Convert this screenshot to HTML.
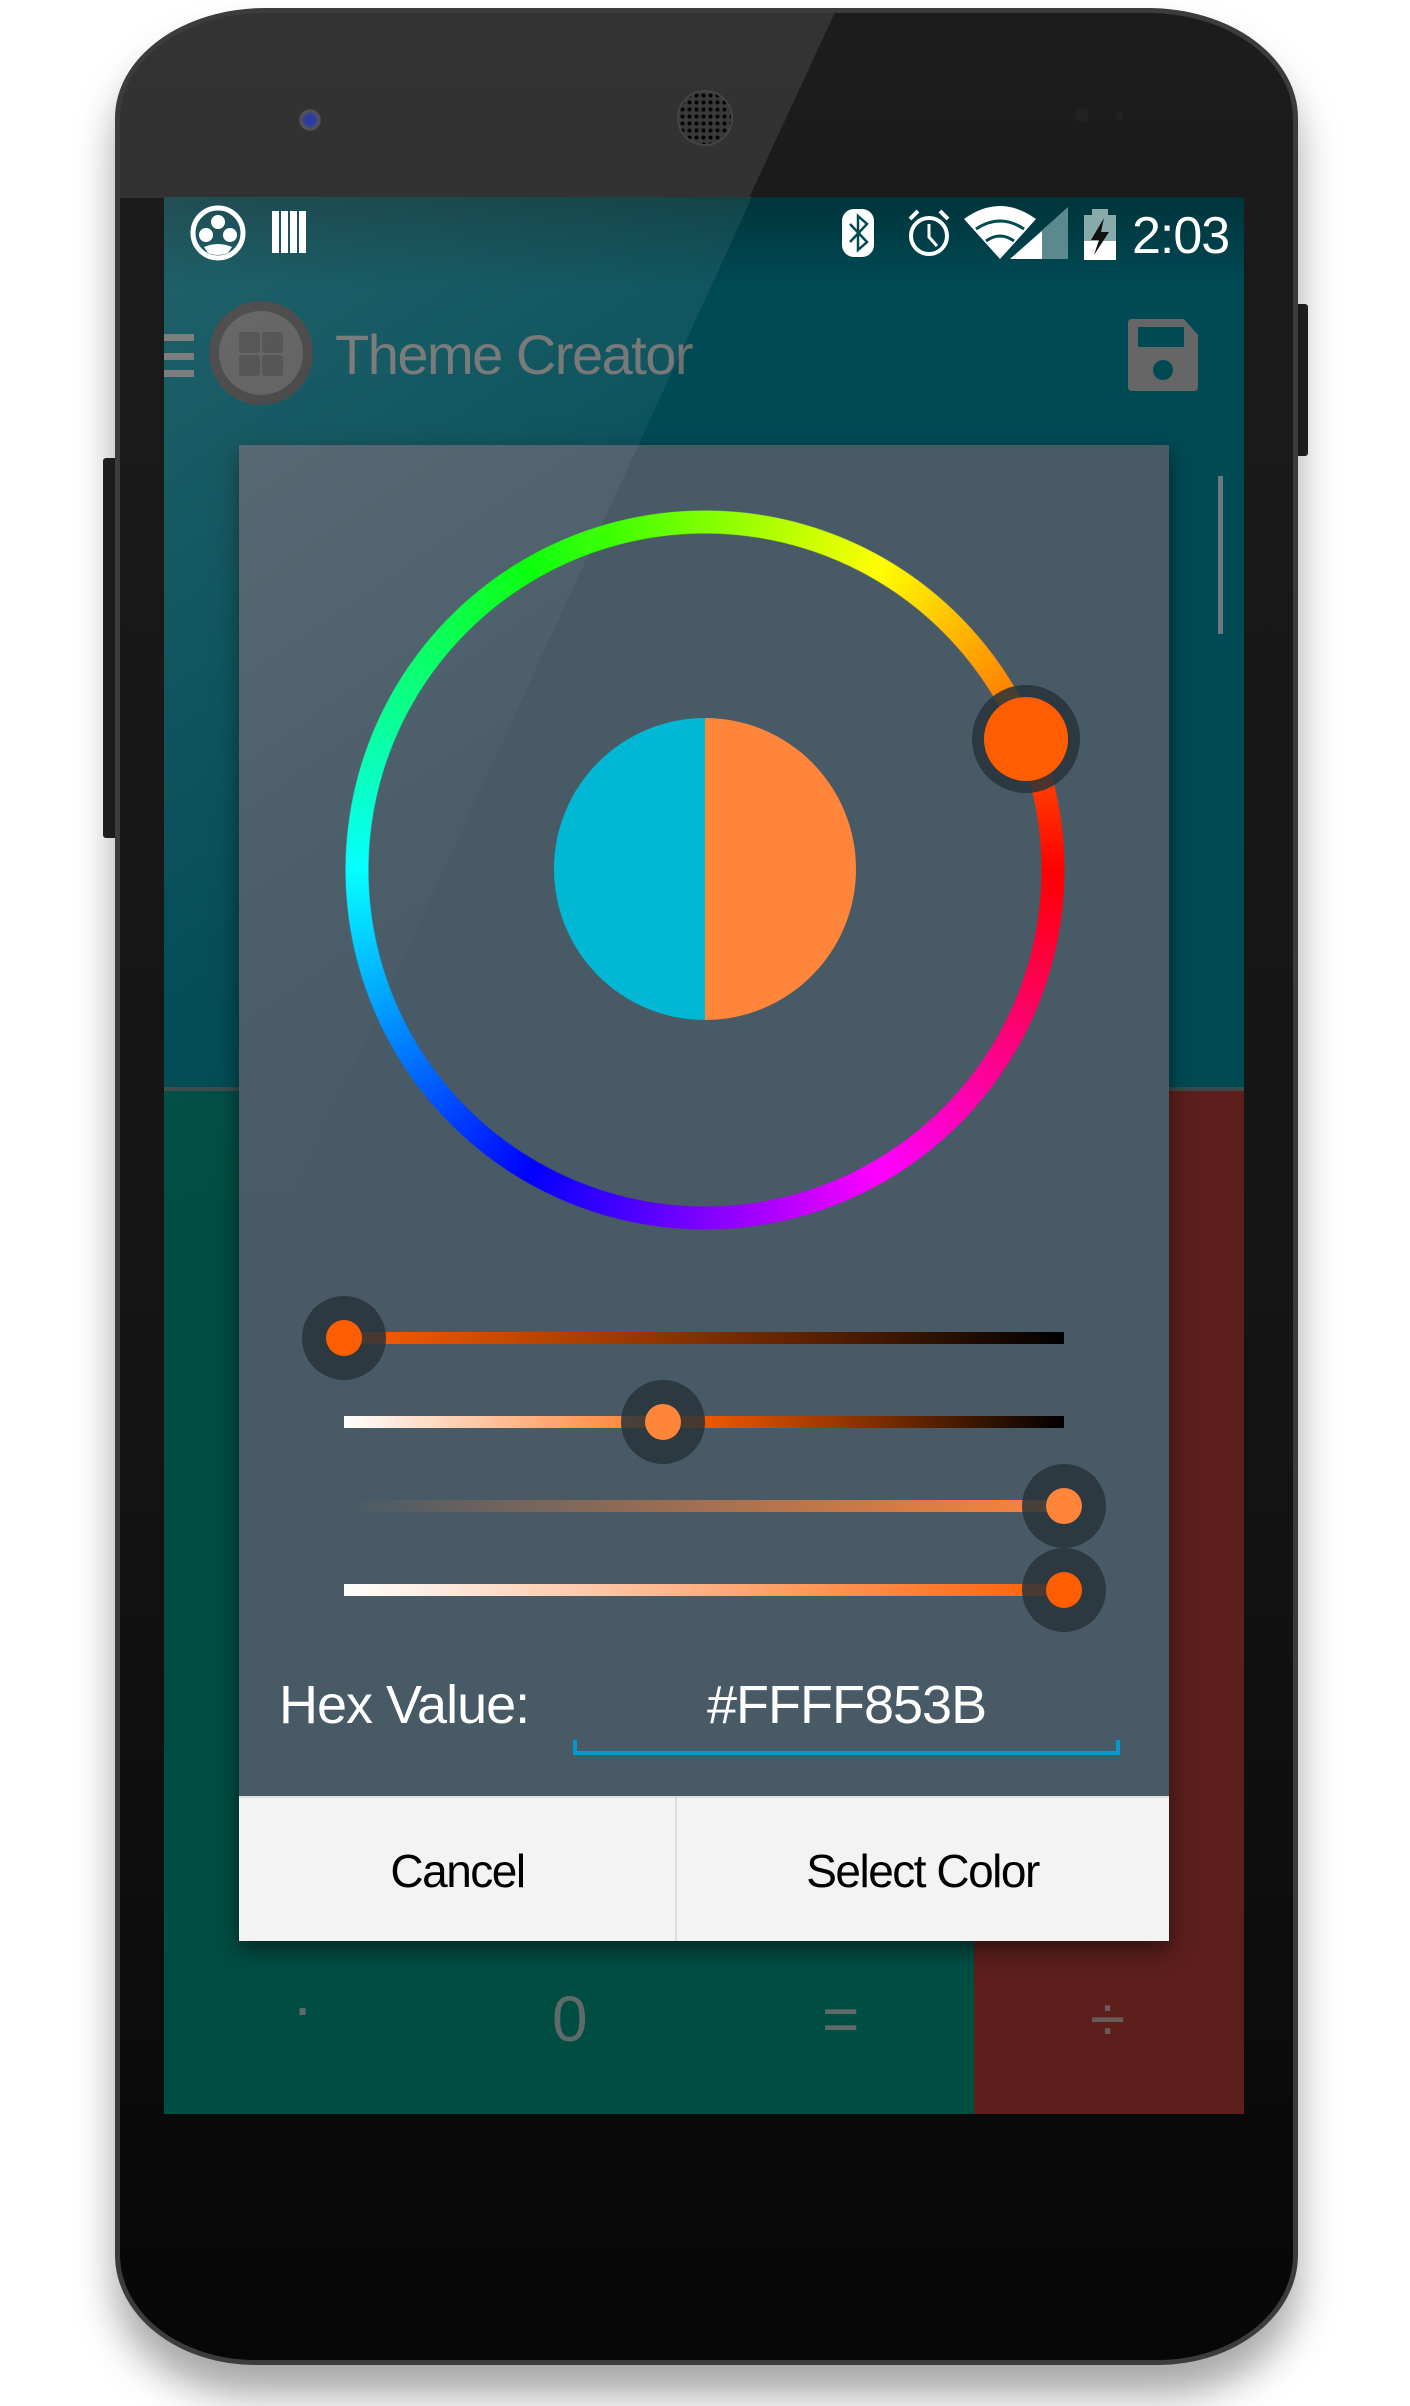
<!DOCTYPE html>
<html><head><meta charset="utf-8"><style>
*{margin:0;padding:0;box-sizing:border-box}
html,body{width:1410px;height:2406px;background:#fff;overflow:hidden;font-family:"Liberation Sans",sans-serif}
.abs{position:absolute}
#phone{left:115px;top:8px;width:1183px;height:2357px;border-radius:150px 150px 140px 140px/110px 110px 110px 110px;background:linear-gradient(180deg,#1c1c1c 0%,#141414 60%,#070707 100%);border:5px solid #3c3c3c;box-shadow:0 30px 40px rgba(0,0,0,.35);overflow:hidden}
#screen{left:164px;top:197px;width:1080px;height:1917px;background:#004a54;overflow:hidden}
.track{position:absolute;height:12px}
.halo{position:absolute;width:84px;height:84px;border-radius:50%;background:rgba(40,52,58,.85)}
.knob{position:absolute;width:36px;height:36px;border-radius:50%}
</style></head><body>
<div class="abs" style="left:1292px;top:304px;width:16px;height:152px;background:#222;border-radius:3px"></div>
<div class="abs" style="left:103px;top:458px;width:16px;height:380px;background:#222;border-radius:3px"></div>
<div id="phone" class="abs">
  <svg class="abs" style="left:-5px;top:-5px" width="1183" height="400"><polygon points="0,0 722,0 634,190 0,190" fill="#fff" opacity=".1"/></svg>
</div>
<div class="abs" style="left:299px;top:109px;width:22px;height:22px;border-radius:50%;background:radial-gradient(circle,#2a3aa0 30%,#555 60%,#333 80%)"></div>
<div class="abs" style="left:677px;top:90px;width:56px;height:56px;border-radius:50%;background:radial-gradient(circle,#000 1.5px,#3a3a3a 2.5px) 0 0/7px 7px;border:2px solid #444"></div>
<div class="abs" style="left:1075px;top:108px;width:14px;height:14px;border-radius:50%;background:#222"></div>
<div class="abs" style="left:1115px;top:111px;width:9px;height:9px;border-radius:50%;background:#222"></div>

<div id="screen" class="abs">
  <div class="abs" style="left:0;top:893px;width:810px;height:1024px;background:#004d42"></div>
  <div class="abs" style="left:810px;top:893px;width:270px;height:1024px;background:#5c1f1c"></div>
  <div class="abs" style="left:0;top:890px;width:1080px;height:4px;background:#3a4a4a"></div>
  <div class="abs" style="left:0;top:0;width:1080px;height:90px;background:linear-gradient(180deg,rgba(0,0,0,.3),rgba(0,0,0,0))"></div>
  <svg class="abs" style="left:0;top:0" width="1080" height="80">
    <circle cx="54" cy="36" r="25" fill="none" stroke="#fff" stroke-width="5"/>
    <circle cx="54" cy="25" r="7" fill="#fff"/><circle cx="42" cy="38" r="7" fill="#fff"/><circle cx="66" cy="38" r="7" fill="#fff"/>
    <path d="M40 50 Q54 44 68 50 L64 56 Q54 60 44 56Z" fill="#fff"/>
    <g fill="#fff"><rect x="108" y="14" width="7" height="42"/><rect x="117" y="14" width="7" height="42"/><rect x="126" y="14" width="7" height="42"/><rect x="135" y="14" width="7" height="42"/></g>
    <rect x="678" y="12" width="32" height="48" rx="12" fill="#fff"/>
    <path d="M686 27 L703 45 L694 53 L694 19 L703 27 L686 45" stroke="#004a54" stroke-width="2.5" fill="none"/>
    <circle cx="765" cy="39" r="18" fill="none" stroke="#fff" stroke-width="4"/>
    <path d="M765 27 V40 L773 49" stroke="#fff" stroke-width="3" fill="none"/>
    <path d="M746 22 L754 14 M784 22 L776 14" stroke="#fff" stroke-width="4"/>
    <path d="M836 62 L800 22 Q836 -4 872 22Z" fill="#fff"/>
    <path d="M812 32 Q836 16 860 32" stroke="#004a54" stroke-width="3" fill="none"/>
    <path d="M822 44 Q836 34 850 44" stroke="#004a54" stroke-width="3" fill="none"/>
    <path d="M846 62 L904 10 V62Z" fill="#5a8a90"/><path d="M846 62 L878 34 V62Z" fill="#fff"/>
    <rect x="920" y="18" width="32" height="45" fill="#8aa"/><rect x="928" y="12" width="16" height="7" fill="#8aa"/>
    <rect x="920" y="44" width="32" height="19" fill="#fff"/>
    <path d="M940 21 L927 43 H935 L930 58 L945 35 H937Z" fill="#111"/>
  </svg>
  <div class="abs" style="left:968px;top:9px;font-size:52px;color:#fff;letter-spacing:-1px">2:03</div>
  <div class="abs" style="left:0;top:137px;width:30px;height:7px;background:#6e6e6e"></div>
  <div class="abs" style="left:0;top:156px;width:30px;height:7px;background:#6e6e6e"></div>
  <div class="abs" style="left:0;top:173px;width:30px;height:7px;background:#6e6e6e"></div>
  <div class="abs" style="left:45px;top:104px;width:104px;height:104px;border-radius:50%;background:#555;border:10px solid #3a3a3a"></div>
  <div class="abs" style="left:75px;top:135px;width:21px;height:21px;background:#444;border-radius:3px"></div>
  <div class="abs" style="left:98px;top:135px;width:21px;height:21px;background:#444;border-radius:3px"></div>
  <div class="abs" style="left:75px;top:158px;width:21px;height:21px;background:#444;border-radius:3px"></div>
  <div class="abs" style="left:98px;top:158px;width:21px;height:21px;background:#444;border-radius:3px"></div>
  <div class="abs" style="left:171px;top:125px;font-size:56px;color:#6f6f6f;letter-spacing:-1.5px">Theme Creator</div>
  <svg class="abs" style="left:962px;top:122px" width="74" height="74"><path d="M2 4 Q2 0 6 0 H58 L72 16 V68 Q72 72 68 72 H6 Q2 72 2 68Z" fill="#666"/><rect x="12" y="8" width="46" height="20" fill="#004a54"/><circle cx="37" cy="51" r="10" fill="#004a54"/></svg>
  <div class="abs" style="left:1054px;top:279px;width:5px;height:158px;background:#6a7a80"></div>
  <div class="abs" style="left:75px;top:248px;width:930px;height:1496px;background:#475a66;box-shadow:0 8px 20px rgba(0,0,0,.5)"></div>
  <div class="abs" style="left:181px;top:313px;width:720px;height:720px;border-radius:50%;background:conic-gradient(from 90deg,#f00,#f0f,#00f,#0ff,#0f0,#ff0,#f00);-webkit-mask:radial-gradient(circle,transparent 336px,#000 337px,#000 359px,transparent 360px);mask:radial-gradient(circle,transparent 336px,#000 337px,#000 359px,transparent 360px)"></div>
  <div class="abs" style="left:390px;top:521px;width:302px;height:302px;border-radius:50%;background:linear-gradient(90deg,#00b8d4 50%,#ff853b 50%)"></div>
  <div class="abs" style="left:808px;top:488px;width:108px;height:108px;border-radius:50%;background:rgba(40,52,58,.85)"></div>
  <div class="abs" style="left:820px;top:500px;width:84px;height:84px;border-radius:50%;background:#ff5e00"></div>
  <div class="track" style="left:180px;top:1135px;width:720px;background:linear-gradient(90deg,#ff5e00,#000)"></div>
  <div class="halo" style="left:138px;top:1099px"></div><div class="knob" style="left:162px;top:1123px;background:#ff5e00"></div>
  <div class="track" style="left:180px;top:1219px;width:720px;background:linear-gradient(90deg,#fff,#ff853b 40%,#ff5e00 47%,#000)"></div>
  <div class="halo" style="left:457px;top:1183px"></div><div class="knob" style="left:481px;top:1207px;background:#ff853b"></div>
  <div class="track" style="left:180px;top:1303px;width:720px;background:linear-gradient(90deg,rgba(255,133,59,0),#ff853b)"></div>
  <div class="halo" style="left:858px;top:1267px"></div><div class="knob" style="left:882px;top:1291px;background:#ff853b"></div>
  <div class="track" style="left:180px;top:1387px;width:720px;background:linear-gradient(90deg,#fff,#ff5e00)"></div>
  <div class="halo" style="left:858px;top:1351px"></div><div class="knob" style="left:882px;top:1375px;background:#ff5e00"></div>
  <div class="abs" style="left:115px;top:1477px;font-size:54px;color:#fff;letter-spacing:-1px">Hex Value:</div>
  <div class="abs" style="left:543px;top:1477px;font-size:54px;color:#fff;letter-spacing:-1px">#FFFF853B</div>
  <div class="abs" style="left:409px;top:1543px;width:547px;height:15px;border:4px solid #0399d0;border-top:none"></div>
  <div class="abs" style="left:75px;top:1599px;width:930px;height:145px;background:#f3f3f3;border-top:2px solid #ddd"></div>
  <div class="abs" style="left:511px;top:1600px;width:2px;height:144px;background:#ddd"></div>
  <div class="abs" style="left:75px;top:1647px;width:437px;text-align:center;font-size:46px;color:#000;letter-spacing:-1.5px">Cancel</div>
  <div class="abs" style="left:512px;top:1647px;width:493px;text-align:center;font-size:46px;color:#000;letter-spacing:-1.5px">Select Color</div>
  <div class="abs" style="left:0;top:1785px;width:1080px;height:100px;font-size:64px;color:#5f6a6a">
    <span class="abs" style="left:128px;top:-12px">·</span>
    <span class="abs" style="left:388px;top:0">0</span>
    <span class="abs" style="left:658px;top:0">=</span>
    <span class="abs" style="left:926px;top:0;color:#6a5a5a">÷</span>
  </div>
  <svg class="abs" style="left:0;top:0" width="1080" height="1917"><defs><linearGradient id="g" x1="0" y1="0" x2="0.4" y2="1"><stop offset="0" stop-color="#fff" stop-opacity=".13"/><stop offset=".7" stop-color="#fff" stop-opacity=".02"/><stop offset="1" stop-color="#fff" stop-opacity="0"/></linearGradient></defs><polygon points="0,0 588,0 130,1000 0,1000" fill="url(#g)"/></svg>
</div>
</body></html>
